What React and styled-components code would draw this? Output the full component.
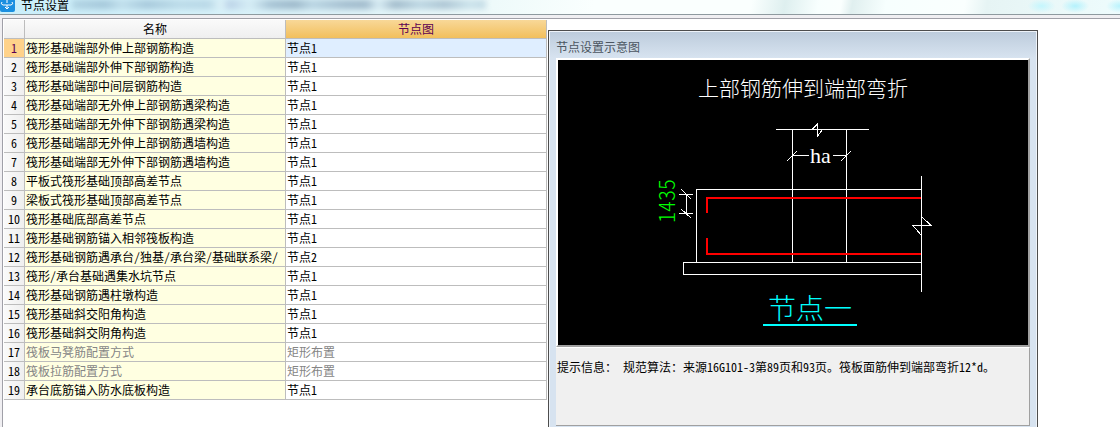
import styled, { createGlobalStyle, css } from "styled-components";

const GlobalStyle = createGlobalStyle`
  body {
    margin: 0;
    background: #fff;
    color: #000;
    font-family: "Noto Sans CJK SC", "Liberation Sans", sans-serif;
    font-size: 12px;
    line-height: 18px;
    font-feature-settings: "hwid";
  }
`;

const Page = styled.div`
  display: flex;
  flex-direction: column;
  height: 100vh;
  min-height: 400px;
  overflow: hidden;
`;

const TitleBar = styled.header`
  display: flex;
  align-items: flex-start;
  flex: none;
  height: 14px;
  border-bottom: 1px solid #8e9a9f;
  background:
    radial-gradient(ellipse 14px 7px at 93% 6px, #c4f6fd, transparent),
    radial-gradient(ellipse 14px 7px at 96% 6px, #b4f2fd, transparent),
    radial-gradient(ellipse 14px 7px at 100% 6px, #b9f3fd, transparent),
    linear-gradient(
      100deg,
      #c9eefa 0%,
      #def3f9 30%,
      #eefafa 44%,
      #fafffe 53%,
      #fafffe 67%,
      #deefef 70%,
      #f8fffe 73%,
      #fafffe 75%,
      #e0efef 76%,
      #f7fffe 79%,
      #fafffe 86%,
      #e6f4f4 88%,
      #eefcfd 100%
    );
`;

const AppIcon = styled.svg`
  flex: none;
  width: 15px;
  height: 12px;
`;

const Title = styled.h1`
  flex: none;
  margin: 0 0 0 6px;
  font-size: 12px;
  font-weight: 400;
  line-height: 10px;
`;

const Glow = styled.div`
  flex: none;
  width: 37%;
  height: 9px;
  margin-left: 3px;
  background: linear-gradient(
    90deg,
    #9dbfd2 0%,
    #84a9c2 8%,
    #b5d3e2 12%,
    #86abc4 18%,
    #a9cbdc 26%,
    #a2c4d8 33%,
    #e6f6fa 36%,
    #a3b8d8 38%,
    #d5ebf4 43%,
    #7f9fb8 48%,
    #6d8ca6 54%,
    #9fbfd2 58%,
    #7796b0 66%,
    #6f8ea9 71%,
    #d0e6f0 74%,
    #6d8ca6 78%,
    #9dbfd2 84%,
    #7d9eb6 90%,
    #b2d2e0 96%,
    #a3c4d6 100%
  );
  filter: blur(3px);
  opacity: 0.6;
`;

const Backdrop = styled.div`
  display: flex;
  flex-direction: column;
  flex: 1;
  min-height: 0;
  background: #f0eff2;
`;

const Workspace = styled.main`
  display: grid;
  grid-template-columns: 545fr 490fr 82fr;
  flex: 1;
  min-height: 0;
  margin: 3px 0 0 2px;
  border-top: 1px solid #a0a0a8;
  border-left: 1px solid #a0a0a8;
  background: #fff;
`;

const NodeTable = styled.table`
  width: calc(100% - 2px);
  margin: 1px 1px 0 1px;
  border-collapse: separate;
  border-spacing: 0;
  table-layout: fixed;
  align-self: start;
`;

const cell = css`
  height: 18px;
  padding: 0;
  border-right: 1px solid #bdbdbd;
  border-bottom: 1px solid #bdbdbd;
  font-weight: 400;
  white-space: nowrap;
  overflow: hidden;
`;

const HeadCell = styled.th`
  ${cell}
  width: ${(p) => p.$width || "auto"};
  color: ${(p) => (p.$active ? "#5c0052" : "#000")};
  background: ${(p) =>
    p.$active
      ? "linear-gradient(#f8d898, #f2bf5c)"
      : "linear-gradient(#fafafa, #efefef)"};
`;

const IndexCell = styled.th`
  ${cell}
  text-align: center;
  color: ${(p) => (p.$active ? "#5c0052" : "#000")};
  background: ${(p) =>
    p.$active ? "#ffd28a" : "linear-gradient(90deg, #fafafa, #efefef)"};
`;

const NameCell = styled.td`
  ${cell}
  padding-left: 1px;
  color: ${(p) => (p.$muted ? "#858585" : "#000")};
  background: #ffffe1;
`;

const ValueCell = styled.td`
  ${cell}
  padding-left: 1px;
  color: ${(p) => (p.$muted ? "#858585" : "#000")};
  background: ${(p) => (p.$active ? "#dfeeff" : "#fff")};
`;

const Dialog = styled.section`
  display: flex;
  flex-direction: column;
  min-height: 0;
  margin-top: 11px;
  padding: 0 7px;
  border: 1px solid #4d4d4d;
  border-bottom: 0;
  background: linear-gradient(#bccbdb, #d7e3f0 27px);
  box-shadow: inset 1px 1px #eef3f9, inset -1px 0 #eef3f9;
`;

const DialogTitle = styled.h2`
  margin: 0;
  padding: 7px 0 2px;
  color: #4b5560;
  font-size: 12px;
  font-weight: 400;
`;

const Drawing = styled.svg`
  display: block;
  width: 100%;
  height: auto;
  box-sizing: border-box;
  background: #000;
  border: 2px solid #a0a0a0;
  border-top-color: #fff;
  border-left-color: #fff;
`;

const Tips = styled.p`
  flex: 1;
  margin: 0 0 1px;
  padding: 10px 0 0 1px;
  border-top: 1px solid #fff;
  border-right: 1px solid #a0a0a0;
  border-bottom: 1px solid #a0a0a0;
  background: #f0f0f0;
  white-space: pre-wrap;
`;

const rows = [
  ["筏形基础端部外伸上部钢筋构造", "节点1"],
  ["筏形基础端部外伸下部钢筋构造", "节点1"],
  ["筏形基础端部中间层钢筋构造", "节点1"],
  ["筏形基础端部无外伸上部钢筋遇梁构造", "节点1"],
  ["筏形基础端部无外伸下部钢筋遇梁构造", "节点1"],
  ["筏形基础端部无外伸上部钢筋遇墙构造", "节点1"],
  ["筏形基础端部无外伸下部钢筋遇墙构造", "节点1"],
  ["平板式筏形基础顶部高差节点", "节点1"],
  ["梁板式筏形基础顶部高差节点", "节点1"],
  ["筏形基础底部高差节点", "节点1"],
  ["筏形基础钢筋锚入相邻筏板构造", "节点1"],
  ["筏形基础钢筋遇承台/独基/承台梁/基础联系梁/", "节点2"],
  ["筏形/承台基础遇集水坑节点", "节点1"],
  ["筏形基础钢筋遇柱墩构造", "节点1"],
  ["筏形基础斜交阳角构造", "节点1"],
  ["筏形基础斜交阴角构造", "节点1"],
  ["筏板马凳筋配置方式", "矩形布置", true],
  ["筏板拉筋配置方式", "矩形布置", true],
  ["承台底筋锚入防水底板构造", "节点1"],
];

const NodeDrawing = () => (
  <Drawing viewBox="0 0 470 285" role="img" aria-label="节点一">
    <g fill="none" stroke="#fff" shapeRendering="crispEdges">
      <path d="M218 69.5H311M234.5 69V202M288.5 69V202" />
      <path d="M254 69.5L259.5 64V76L264.5 69.5" />
      <path d="M234 95.5H251M275 95.5H288M229 101L239 91M283 101L293 91" />
      <path d="M363 129.5H138.5V202.5" />
      <path d="M363 202.5H125.5V214.5H363M363.5 116V232" />
      <path d="M363 156L373 165.5H355L363 175" />
      <path d="M121 134.5H135M121 153.5H135M128.5 134V153M123 129L133 139M123 149L133 158" />
    </g>
    <path
      d="M363 138H149V153M149 178V194H363"
      fill="none"
      stroke="#f00"
      strokeWidth="2"
      shapeRendering="crispEdges"
    />
    <path
      d="M205 265H299"
      stroke="#0ff"
      strokeWidth="2"
      shapeRendering="crispEdges"
    />
    <text x="140" y="36" fill="#fff" fontSize="21" fontWeight="300">
      上部钢筋伸到端部弯折
    </text>
    <text
      x="252"
      y="103"
      fill="#fff"
      fontSize="22"
      fontFamily="Liberation Serif, serif"
    >
      ha
    </text>
    <text
      transform="translate(117 163) rotate(-90)"
      fill="#0f0"
      fontSize="22"
      fontWeight="300"
    >
      1435
    </text>
    <text x="210" y="259" fill="#0ff" fontSize="28" fontWeight="300">
      节点一
    </text>
  </Drawing>
);

const App = () => {
  return (
    <Page>
      <GlobalStyle />
      <TitleBar>
        <AppIcon viewBox="0 0 15 12">
          <path d="M0 0H15V10Q15 12 13 12H2Q0 12 0 10Z" fill="#1a8fe0" />
          <path
            d="M7 0V3M7 5V9M2 2Q0 4 3 5H11Q14 4 12 2M5 7L7 9L9 7"
            fill="none"
            stroke="#fff"
            strokeWidth="1"
          />
        </AppIcon>
        <Title>节点设置</Title>
        <Glow />
      </TitleBar>
      <Backdrop>
        <Workspace>
          <NodeTable>
            <thead>
              <tr>
                <HeadCell $width="20px" />
                <HeadCell scope="col">名称</HeadCell>
                <HeadCell scope="col" $active>
                  节点图
                </HeadCell>
              </tr>
            </thead>
            <tbody>
              {rows.map(([name, value, muted], i) => (
                <tr key={name}>
                  <IndexCell scope="row" $active={i === 0}>
                    {i + 1}
                  </IndexCell>
                  <NameCell $muted={muted}>{name}</NameCell>
                  <ValueCell $muted={muted} $active={i === 0}>
                    {value}
                  </ValueCell>
                </tr>
              ))}
            </tbody>
          </NodeTable>
          <Dialog>
            <DialogTitle>节点设置示意图</DialogTitle>
            <NodeDrawing />
            <Tips>
              提示信息： 规范算法：来源16G101-3第89页和93页。筏板面筋伸到端部弯折12*d。
            </Tips>
          </Dialog>
        </Workspace>
      </Backdrop>
    </Page>
  );
};

export default App;
